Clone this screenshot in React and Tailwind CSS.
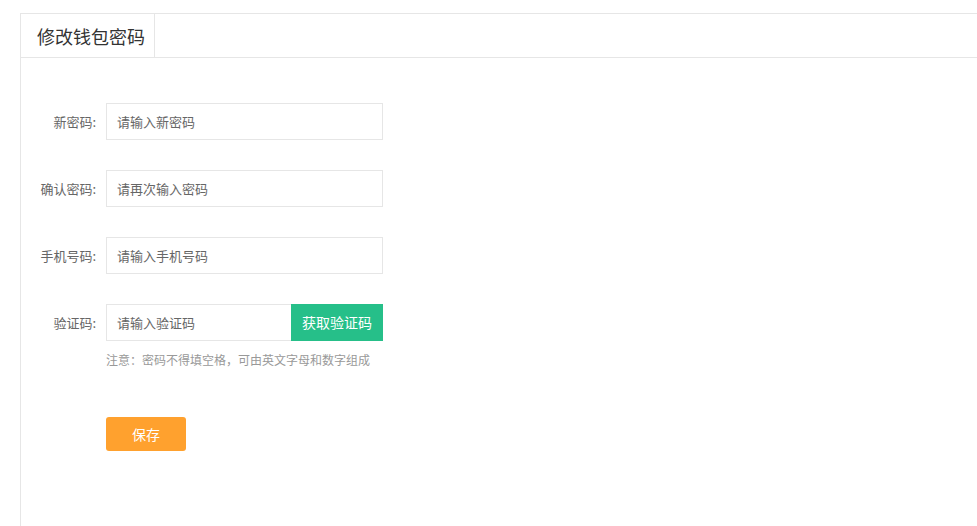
import { useState } from 'react';

const fields = [
    { label: '新密码:', placeholder: '请输入新密码', type: 'password' },
    { label: '确认密码:', placeholder: '请再次输入密码', type: 'password' },
    { label: '手机号码:', placeholder: '请输入手机号码', type: 'text' },
];

const App = () => {
    const [code, setCode] = useState('');

    return (
        <div className="min-h-screen bg-white pt-[13px] pl-[20px] font-['Noto_Sans_CJK_SC',sans-serif]">
            <div className="border-l border-t border-[#e6e6e6] min-h-[513px]">
                {/* Cabecera con pestaña */}
                <div className="h-[44px] border-b border-[#e6e6e6] flex">
                    <div className="w-[134px] border-r border-[#e6e6e6] pl-[16px] flex items-center text-[18px] text-[#333] leading-none">
                        修改钱包密码
                    </div>
                </div>

                <form className="pt-[45px]" onSubmit={e => e.preventDefault()}>
                    {fields.map(f => (
                        <div key={f.label} className="flex items-center mb-[30px]">
                            <label className="w-[75px] text-right text-[13px] text-[#666]">{f.label}</label>
                            <input
                                type={f.type}
                                placeholder={f.placeholder}
                                className="ml-[10px] w-[277px] h-[37px] border border-[#e6e6e6] px-[10px] text-[13px] text-[#333] placeholder:text-[#666] outline-none"
                            />
                        </div>
                    ))}

                    <div className="flex items-center">
                        <label className="w-[75px] text-right text-[13px] text-[#666]">验证码:</label>
                        <div className="ml-[10px] flex h-[37px]">
                            <input
                                value={code}
                                onChange={e => setCode(e.target.value)}
                                placeholder="请输入验证码"
                                className="w-[185px] h-full border border-[#e6e6e6] border-r-0 px-[10px] text-[13px] text-[#333] placeholder:text-[#666] outline-none"
                            />
                            <button type="button" className="w-[92px] h-full bg-[#26bf89] text-white text-[14px]">
                                获取验证码
                            </button>
                        </div>
                    </div>
                    <p className="ml-[85px] mt-[10px] text-[12px] text-[#999] leading-[17px]">注意：密码不得填空格，可由英文字母和数字组成</p>

                    <button className="ml-[85px] mt-[49px] w-[80px] h-[34px] rounded-[3px] bg-[#ffa12e] text-white text-[14px]">
                        保存
                    </button>
                </form>
            </div>
        </div>
    );
};

export default App;
